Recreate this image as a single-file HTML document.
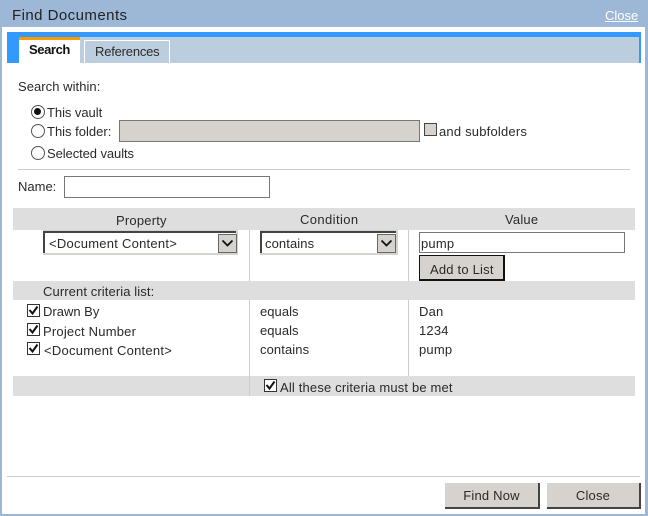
<!DOCTYPE html>
<html><head><meta charset="utf-8"><style>
html,body{margin:0;padding:0;background:#fff}
#r{position:relative;width:648px;height:516px;overflow:hidden;background:#fff;font-family:"Liberation Sans",sans-serif;font-size:13px;letter-spacing:.2px;color:#2a2a2a}
.a{position:absolute}
.t{position:absolute;white-space:nowrap;line-height:16px;height:16px}
.n{letter-spacing:.05px}
.chk{position:absolute;width:11px;height:11px;border:1px solid #333;background:#fff}
.rad{position:absolute;width:12px;height:12px;border:1px solid #555;border-radius:50%;background:#fff}
.btn{position:absolute;background:#d6d3ce;border-right:2px solid #444;border-bottom:2px solid #444;box-sizing:border-box;text-align:center}
</style></head><body><div id="r">
<div class="a" style="left:0;top:0;width:648px;height:27px;background:#9db8d7"></div>
<div class="a" style="left:0;top:0;width:2px;height:516px;background:#9db8d7"></div>
<div class="a" style="left:645px;top:0;width:3px;height:516px;background:#9db8d7"></div>
<div class="a" style="left:0;top:514px;width:648px;height:2px;background:#9db8d7"></div>
<div class="t" style="left:12px;top:8px;font-size:15px;letter-spacing:.45px;color:#222">Find Documents</div>
<div class="t" style="left:605px;top:8px;font-size:13px;letter-spacing:0;color:#fff;text-decoration:underline">Close</div>

<div class="a" style="left:7px;top:32px;width:634px;height:31px;background:#39f"></div>
<div class="a" style="left:19px;top:37px;width:620px;height:26px;background:#bccede"></div>
<div class="a" style="left:19px;top:37px;width:61px;height:26px;background:#fff"></div>
<div class="a" style="left:19px;top:37px;width:61px;height:3px;background:#f90"></div>
<div class="t" style="left:29px;top:42px;font-weight:bold;font-size:13px;letter-spacing:-.4px;color:#111">Search</div>
<div class="a" style="left:84px;top:40px;width:84px;height:23px;border:1px solid #fff;border-bottom:0"></div>
<div class="t" style="left:95px;top:44px;font-size:13px;letter-spacing:-.2px">References</div>

<div class="t n" style="left:18px;top:79px">Search within:</div>
<div class="rad" style="left:31px;top:105px"></div>
<div class="a" style="left:34px;top:108px;width:7px;height:7px;border-radius:50%;background:#111"></div>
<div class="t n" style="left:47px;top:105px;letter-spacing:-.05px">This vault</div>
<div class="rad" style="left:31px;top:124px"></div>
<div class="t n" style="left:47px;top:124px;letter-spacing:0">This folder:</div>
<div class="a" style="left:119px;top:120px;width:299px;height:20px;background:#d6d3ce;border:1px solid #777"></div>
<div class="a" style="left:424px;top:123px;width:11px;height:11px;background:#d6d3ce;border:1px solid #444"></div>
<div class="t" style="left:439px;top:124px">and subfolders</div>
<div class="rad" style="left:31px;top:146px"></div>
<div class="t" style="left:47px;top:146px;letter-spacing:-.08px">Selected vaults</div>
<div class="a" style="left:18px;top:169px;width:612px;height:1px;background:#ccc"></div>

<div class="t" style="left:18px;top:179px;letter-spacing:0">Name:</div>
<div class="a" style="left:64px;top:176px;width:204px;height:20px;background:#fff;border:1px solid #777"></div>

<div class="a" style="left:13px;top:208px;width:622px;height:22px;background:#dedede"></div>
<div class="t" style="left:116px;top:213px">Property</div>
<div class="t" style="left:300px;top:212px;letter-spacing:.4px">Condition</div>
<div class="t" style="left:505px;top:212px">Value</div>

<div class="a" style="left:249px;top:230px;width:1px;height:166px;background:#ccc"></div>
<div class="a" style="left:408px;top:230px;width:1px;height:146px;background:#ccc"></div>

<div class="a" style="left:43px;top:230px;width:195px;height:25px;background:#d6d3ce"></div>
<div class="a" style="left:43px;top:231px;width:193px;height:22px;background:#fff;border-left:2px solid #444;border-top:2px solid #444;box-sizing:border-box"></div>
<div class="t" style="left:49px;top:236px;letter-spacing:.25px">&lt;Document Content&gt;</div>
<div class="a" style="left:218px;top:234px;width:17px;height:17px;background:#d6d3ce;border:1px solid #666"></div>
<svg class="a" style="left:218px;top:234px" width="19" height="19"><path d="M4.500 6.500l5 5l5-5" fill="none" stroke="#111" stroke-width="1.800"/></svg>

<div class="a" style="left:260px;top:230px;width:138px;height:25px;background:#d6d3ce"></div>
<div class="a" style="left:260px;top:231px;width:136px;height:22px;background:#fff;border-left:2px solid #444;border-top:2px solid #444;box-sizing:border-box"></div>
<div class="t" style="left:265px;top:236px;letter-spacing:.1px">contains</div>
<div class="a" style="left:377px;top:234px;width:17px;height:17px;background:#d6d3ce;border:1px solid #666"></div>
<svg class="a" style="left:377px;top:234px" width="19" height="19"><path d="M4.500 6.500l5 5l5-5" fill="none" stroke="#111" stroke-width="1.800"/></svg>

<div class="a" style="left:419px;top:232px;width:204px;height:19px;background:#fff;border:1px solid #777"></div>
<div class="t" style="left:421px;top:236px">pump</div>
<div class="a" style="left:419px;top:255px;width:86px;height:26px;box-sizing:border-box;border:1px solid #111;border-right:2px solid #111;border-bottom:2px solid #111;background:#d6d3ce"></div>
<div class="t" style="left:430px;top:262px">Add to List</div>

<div class="a" style="left:13px;top:281px;width:622px;height:19px;background:#dedede"></div>
<div class="t" style="left:43px;top:284px;letter-spacing:.1px">Current criteria list:</div>

<div class="chk" style="left:27px;top:304px"></div>
<svg class="a" style="left:27px;top:304px" width="13" height="13"><path d="M2.500 6l3 3.500l5-7" fill="none" stroke="#111" stroke-width="2"/></svg>
<div class="t" style="left:43px;top:304px;letter-spacing:0">Drawn By</div>
<div class="t" style="left:260px;top:304px;letter-spacing:.05px">equals</div>
<div class="t" style="left:419px;top:304px">Dan</div>

<div class="chk" style="left:27px;top:323px"></div>
<svg class="a" style="left:27px;top:323px" width="13" height="13"><path d="M2.500 6l3 3.500l5-7" fill="none" stroke="#111" stroke-width="2"/></svg>
<div class="t" style="left:43px;top:324px">Project Number</div>
<div class="t" style="left:260px;top:323px;letter-spacing:.05px">equals</div>
<div class="t" style="left:419px;top:323px">1234</div>

<div class="chk" style="left:27px;top:342px"></div>
<svg class="a" style="left:27px;top:342px" width="13" height="13"><path d="M2.500 6l3 3.500l5-7" fill="none" stroke="#111" stroke-width="2"/></svg>
<div class="t" style="left:44px;top:343px;letter-spacing:.25px">&lt;Document Content&gt;</div>
<div class="t" style="left:260px;top:342px;letter-spacing:.1px">contains</div>
<div class="t" style="left:419px;top:342px">pump</div>

<div class="a" style="left:13px;top:376px;width:622px;height:20px;background:#dedede"></div>
<div class="a" style="left:249px;top:376px;width:1px;height:20px;background:#ccc"></div>
<div class="chk" style="left:264px;top:379px"></div>
<svg class="a" style="left:264px;top:379px" width="13" height="13"><path d="M2.500 6l3 3.500l5-7" fill="none" stroke="#111" stroke-width="2"/></svg>
<div class="t" style="left:280px;top:380px;letter-spacing:.17px">All these criteria must be met</div>

<div class="a" style="left:7px;top:476px;width:633px;height:1px;background:#ccc"></div>
<div class="btn" style="left:445px;top:483px;width:95px;height:26px;line-height:26px">Find Now</div>
<div class="btn" style="left:547px;top:483px;width:94px;height:26px;line-height:26px">Close</div>
</div></body></html>
